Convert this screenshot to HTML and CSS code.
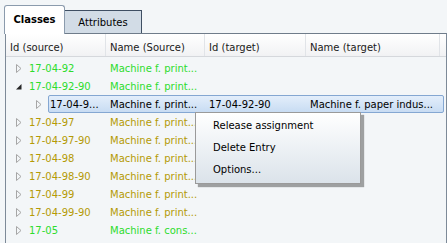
FILE: index.html
```html
<!DOCTYPE html>
<html>
<head>
    <title>Classes</title>
    <link rel="stylesheet" href="styles.css">
</head>
<body>
    <div class="tabs">
        <div class="tab active">Classes</div>
        <div class="tab">Attributes</div>
    </div>

    <div class="panel">
        <div class="head">
            <div class="hcell">Id (source)</div>
            <div class="hcell">Name (Source)</div>
            <div class="hcell">Id (target)</div>
            <div class="hcell">Name (target)</div>
        </div>

        <div class="rows">
            <div class="row green">
                <div class="cell first"><svg class="exp" width="6" height="9" viewBox="0 0 6 9"><path d="M0.5 0.5 L5 4.5 L0.5 8.5 Z" fill="none" stroke="#a6a6a6"/></svg>17-04-92</div>
                <div class="cell">Machine f. print...</div>
            </div>
            <div class="row green">
                <div class="cell first"><svg class="exp" width="6" height="9" viewBox="0 0 6 9"><path d="M5.5 2 L5.5 7.5 L0 7.5 Z" fill="#262626"/></svg>17-04-92-90</div>
                <div class="cell">Machine f. print...</div>
            </div>
            <div class="row child">
                <svg class="exp" width="6" height="9" viewBox="0 0 6 9"><path d="M0.5 0.5 L5 4.5 L0.5 8.5 Z" fill="none" stroke="#a6a6a6"/></svg>
                <div class="sel">
                    <div class="cell">17-04-9...</div>
                    <div class="cell">Machine f. print...</div>
                    <div class="cell">17-04-92-90</div>
                    <div class="cell">Machine f. paper indus...</div>
                </div>
            </div>
            <div class="row gold">
                <div class="cell first"><svg class="exp" width="6" height="9" viewBox="0 0 6 9"><path d="M0.5 0.5 L5 4.5 L0.5 8.5 Z" fill="none" stroke="#a6a6a6"/></svg>17-04-97</div>
                <div class="cell">Machine f. print...</div>
            </div>
            <div class="row gold">
                <div class="cell first"><svg class="exp" width="6" height="9" viewBox="0 0 6 9"><path d="M0.5 0.5 L5 4.5 L0.5 8.5 Z" fill="none" stroke="#a6a6a6"/></svg>17-04-97-90</div>
                <div class="cell">Machine f. print...</div>
            </div>
            <div class="row gold">
                <div class="cell first"><svg class="exp" width="6" height="9" viewBox="0 0 6 9"><path d="M0.5 0.5 L5 4.5 L0.5 8.5 Z" fill="none" stroke="#a6a6a6"/></svg>17-04-98</div>
                <div class="cell">Machine f. print...</div>
            </div>
            <div class="row gold">
                <div class="cell first"><svg class="exp" width="6" height="9" viewBox="0 0 6 9"><path d="M0.5 0.5 L5 4.5 L0.5 8.5 Z" fill="none" stroke="#a6a6a6"/></svg>17-04-98-90</div>
                <div class="cell">Machine f. print...</div>
            </div>
            <div class="row gold">
                <div class="cell first"><svg class="exp" width="6" height="9" viewBox="0 0 6 9"><path d="M0.5 0.5 L5 4.5 L0.5 8.5 Z" fill="none" stroke="#a6a6a6"/></svg>17-04-99</div>
                <div class="cell">Machine f. print...</div>
            </div>
            <div class="row gold">
                <div class="cell first"><svg class="exp" width="6" height="9" viewBox="0 0 6 9"><path d="M0.5 0.5 L5 4.5 L0.5 8.5 Z" fill="none" stroke="#a6a6a6"/></svg>17-04-99-90</div>
                <div class="cell">Machine f. print...</div>
            </div>
            <div class="row green">
                <div class="cell first"><svg class="exp" width="6" height="9" viewBox="0 0 6 9"><path d="M0.5 0.5 L5 4.5 L0.5 8.5 Z" fill="none" stroke="#a6a6a6"/></svg>17-05</div>
                <div class="cell">Machine f. cons...</div>
            </div>
        </div>

        <div class="menu">
            <div class="item">Release assignment</div>
            <div class="item">Delete Entry</div>
            <div class="item">Options...</div>
        </div>
    </div>
</body>
</html>
```

FILE: styles.css
```css
body {
    margin: 0;
    height: 243px;
    overflow: hidden;
    font-family: "DejaVu Sans", Verdana, sans-serif;
    font-size: 10px;
    color: #000;
    background-color: #f3f6f8;
}

.tabs {
    display: flex;
    align-items: flex-end;
    padding: 5px 0 0 4px;
    position: relative;
    z-index: 2;
}

.tab {
    box-sizing: border-box;
    height: 23px;
    width: 78px;
    padding-top: 6px;
    text-align: center;
    background-color: #d2dce6;
    border: 1px solid #3f4f63;
    border-bottom: none;
}

.tab.active {
    height: 29px;
    width: 61px;
    padding-top: 8px;
    margin-bottom: -1px;
    margin-right: -1px;
    font-weight: bold;
    background-color: #fff;
    border-color: #8b9bad;
    border-radius: 3px 3px 0 0;
    position: relative;
    z-index: 1;
}

.panel {
    position: relative;
    margin-left: 5px;
    height: 220px;
    border-top: 1px solid #6f7c8a;
    border-left: 1px solid #7d8a98;
    border-right: 1px solid #7d8a98;
}

.head {
    display: grid;
    grid-template-columns: 100px 99px 101px 134px 1fr;
    height: 22px;
    background: linear-gradient(#ffffff, #f1f2f4);
    border-bottom: 1px solid #d5d8dc;
}

.hcell {
    padding: 8px 0 0 4px;
    color: #1a1a1a;
    border-right: 1px solid #e1e4e8;
}

.rows {
    padding-top: 2px;
}

.row {
    display: grid;
    grid-template-columns: 100px 99px;
    height: 18px;
    align-items: center;
}

.cell {
    padding-left: 4px;
    white-space: nowrap;
    overflow: hidden;
}

.cell.first {
    display: flex;
    align-items: center;
    padding-left: 10px;
}

.exp {
    margin-right: 7px;
    flex: none;
}

.green {
    color: #2ddc2d;
}

.gold {
    color: #b49a05;
}

.row.child {
    display: flex;
    padding-left: 30px;
}

.row.child .exp {
    margin-right: 6px;
}

.sel {
    box-sizing: border-box;
    display: grid;
    grid-template-columns: 57px 99px 101px 1fr;
    align-items: center;
    width: 396px;
    height: 18px;
    background: linear-gradient(#e3eefb, #c8dcf3);
    border: 1px solid #84a7d2;
    border-radius: 2px;
}

.sel .cell:first-child {
    padding-left: 1px;
}

.menu {
    position: absolute;
    left: 189px;
    top: 78px;
    box-sizing: border-box;
    width: 166px;
    padding: 2px 0;
    background: linear-gradient(#ffffff, #dbe3ea);
    border: 1px solid #9a9a9a;
    box-shadow: 3px 3px 1px rgba(0, 0, 0, 0.35);
}

.item {
    height: 22px;
    line-height: 22px;
    padding-left: 17px;
}
```
